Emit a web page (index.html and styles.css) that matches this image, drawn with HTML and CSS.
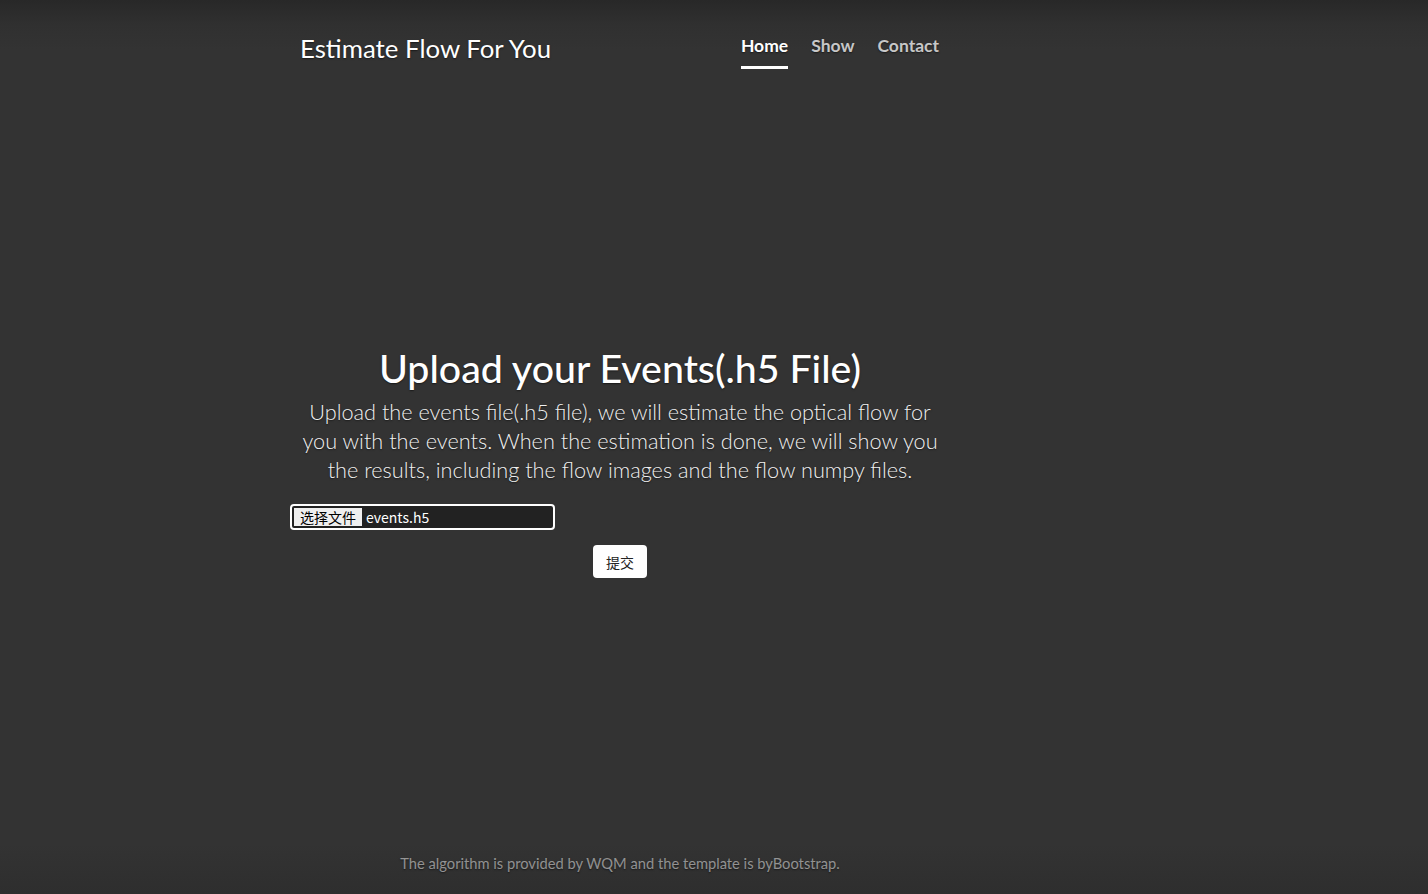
FILE: index.html
```html
<!DOCTYPE html>
<html lang="en">
<head>
<meta charset="utf-8">
<title>Estimate Flow For You</title>
<link rel="stylesheet" href="styles.css">
</head>
<body>
<div class="cover">
  <header class="masthead">
    <h3 class="brand">Estimate Flow For You</h3>
    <nav class="nav">
      <a class="nav-link active" href="#">Home</a>
      <a class="nav-link" href="#">Show</a>
      <a class="nav-link" href="#">Contact</a>
    </nav>
  </header>
  <main class="inner">
    <h1 class="cover-heading">Upload your Events(.h5 File)</h1>
    <p class="lead">Upload the events file(.h5 file), we will estimate the optical flow for you with the events. When the estimation is done, we will show you the results, including the flow images and the flow numpy files.</p>
    <form class="upload">
      <div class="file-input"><span class="file-btn">选择文件</span><span class="file-name">events.h5</span></div>
      <div class="submit-row"><button type="button" class="submit">提交</button></div>
    </form>
  </main>
  <footer class="mastfoot">
    <p>The algorithm is provided by WQM and the template is byBootstrap.</p>
  </footer>
</div>
</body>
</html>
```
FILE: styles.css
```css
html, body {
  height: 100%;
}
body {
  margin: 0;
  background: linear-gradient(to bottom, #282828 0, #303030 25px, #333 50px, #333 calc(100% - 50px), #2e2e2e 100%);
  color: #fff;
  font-family: Lato, "Noto Sans", "Noto Sans CJK SC", sans-serif;
  text-shadow: 0 0.05rem 0.1rem rgba(0, 0, 0, 0.5);
  display: flex;
}
.cover {
  width: 640px;
  margin-left: 300px;
  display: flex;
  flex-direction: column;
  height: 100%;
  box-sizing: border-box;
}
.masthead {
  display: flex;
  justify-content: space-between;
  align-items: flex-start;
  padding-top: 31px;
}
.brand {
  margin: 0;
  font-size: 25.8px;
  font-weight: 400;
  line-height: 34px;
}
.nav {
  display: flex;
  gap: 23px;
  margin-right: 1px;
}
.nav-link {
  color: rgba(255, 255, 255, 0.75);
  text-decoration: none;
  font-weight: 700;
  font-size: 17.5px;
  line-height: 26px;
  padding: 2px 0 7px;
  border-bottom: 3px solid transparent;
}
.nav-link.active {
  color: #fff;
  border-bottom-color: #fff;
}
.inner {
  flex: 1;
  display: flex;
  flex-direction: column;
  justify-content: center;
  text-align: center;
  padding-top: 2px;
}
.cover-heading {
  margin: 0 0 6px;
  font-size: 39.3px;
  font-weight: 500;
  line-height: 48px;
}
.lead {
  margin: 0 0 19px;
  font-size: 21.7px;
  font-weight: 300;
  line-height: 29px;
  color: #f0f0f0;
}
.upload {
  display: flex;
  flex-direction: column;
}
.file-input {
  align-self: flex-start;
  margin-left: -10px;
  width: 265px;
  height: 26px;
  box-sizing: border-box;
  border: 2px solid #fff;
  border-radius: 4px;
  background: #222;
  display: flex;
  align-items: stretch;
  padding: 2px;
  text-shadow: none;
  font-family: "Noto Sans CJK SC", "Noto Sans", sans-serif;
  font-size: 14px;
}
.file-btn {
  background: #efefef;
  color: #000;
  padding: 0 6px;
  line-height: 18px;
  display: flex;
  align-items: center;
}
.file-name {
  color: #fff;
  padding-left: 4px;
  line-height: 18px;
  display: flex;
  align-items: center;
}
.submit-row {
  margin-top: 15px;
  display: flex;
  justify-content: center;
}
.submit {
  background: #fff;
  color: #222;
  border: none;
  border-radius: 4px;
  width: 54px;
  height: 33px;
  font-family: "Noto Sans CJK SC", sans-serif;
  font-size: 14px;
  text-shadow: none;
  padding: 0;
}
.mastfoot {
  text-align: center;
  color: rgba(255, 255, 255, 0.5);
  padding-bottom: 19px;
}
.mastfoot p {
  margin: 0;
  font-size: 14.7px;
  line-height: 24px;
}
```
